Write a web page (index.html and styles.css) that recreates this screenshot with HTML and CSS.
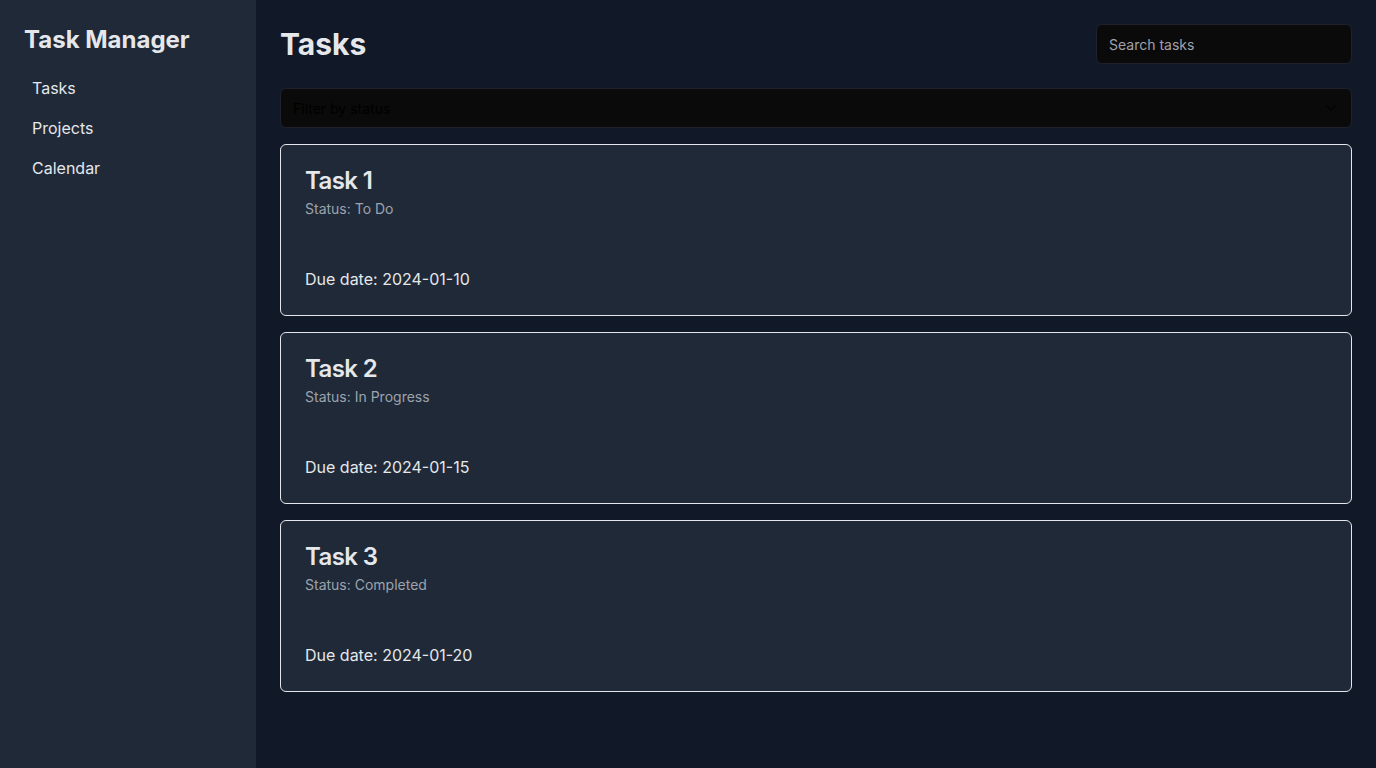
FILE: index.html
```html
<!DOCTYPE html>
<html lang="en">
<head>
<meta charset="utf-8">
<title>Task Manager</title>
<link rel="stylesheet" href="styles.css">
</head>
<body>
<div class="app">
  <aside class="sidebar">
    <h1 class="brand">Task Manager</h1>
    <nav class="nav">
      <a class="nav-item" href="#">Tasks</a>
      <a class="nav-item" href="#">Projects</a>
      <a class="nav-item" href="#">Calendar</a>
    </nav>
  </aside>
  <main class="main">
    <header class="main-header">
      <h2 class="page-title">Tasks</h2>
      <input class="search" type="text" placeholder="Search tasks">
    </header>
    <button class="select" type="button">
      <span class="select-placeholder">Filter by status</span>
      <svg class="chevron" width="16" height="16" viewBox="0 0 24 24" fill="none" stroke="currentColor" stroke-width="2" stroke-linecap="round" stroke-linejoin="round"><path d="m6 9 6 6 6-6"/></svg>
    </button>
    <div class="task-list">
      <div class="card">
        <div class="card-header">
          <h3 class="card-title">Task 1</h3>
          <p class="card-desc">Status: To Do</p>
        </div>
        <div class="card-content">
          <p class="due">Due date: 2024-01-10</p>
        </div>
      </div>
      <div class="card">
        <div class="card-header">
          <h3 class="card-title">Task 2</h3>
          <p class="card-desc">Status: In Progress</p>
        </div>
        <div class="card-content">
          <p class="due">Due date: 2024-01-15</p>
        </div>
      </div>
      <div class="card">
        <div class="card-header">
          <h3 class="card-title">Task 3</h3>
          <p class="card-desc">Status: Completed</p>
        </div>
        <div class="card-content">
          <p class="due">Due date: 2024-01-20</p>
        </div>
      </div>
    </div>
  </main>
</div>
</body>
</html>
```

FILE: styles.css
```css
* { box-sizing: border-box; }
html, body { margin: 0; padding: 0; height: 100%; }
body {
  font-family: Inter, "Noto Sans", sans-serif;
  background: #111827;
  color: #e5e7eb;
}
.app {
  display: flex;
  min-height: 100vh;
}
.sidebar {
  width: 256px;
  flex-shrink: 0;
  background: #1f2937;
  padding: 24px;
}
.brand {
  margin: 0 0 12px;
  font-size: 24px;
  line-height: 32px;
  font-weight: 700;
  color: #e5e7eb;
}
.nav {
  display: flex;
  flex-direction: column;
}
.nav-item {
  display: block;
  padding: 8px;
  font-size: 16px;
  line-height: 24px;
  color: #e5e7eb;
  text-decoration: none;
}
.main {
  flex: 1;
  padding: 24px;
}
.main-header {
  display: flex;
  align-items: center;
  justify-content: space-between;
  margin-bottom: 24px;
}
.page-title {
  margin: 0;
  font-size: 30px;
  line-height: 36px;
  font-weight: 700;
  color: #e5e7eb;
}
.search {
  width: 256px;
  height: 40px;
  padding: 8px 12px;
  border: 1px solid #1f2329;
  border-radius: 6px;
  background: #0a0a0a;
  color: #e5e7eb;
  font-family: inherit;
  font-size: 14px;
  outline: none;
}
.search::placeholder { color: #a1a1aa; }
.select {
  width: 100%;
  height: 40px;
  display: flex;
  align-items: center;
  justify-content: space-between;
  padding: 8px 12px;
  border: 1px solid #1f2329;
  border-radius: 6px;
  background: #0a0a0a;
  font-family: inherit;
  font-size: 14px;
  color: #000;
  margin-bottom: 16px;
}
.select-placeholder { color: #000; }
.chevron { color: #000; opacity: 0.6; }
.task-list {
  display: flex;
  flex-direction: column;
  gap: 16px;
}
.card {
  background: #1f2937;
  border: 1px solid #e5e7eb;
  border-radius: 6px;
}
.card-header {
  padding: 24px;
  display: flex;
  flex-direction: column;
  gap: 6px;
}
.card-title {
  margin: 0;
  font-size: 24px;
  line-height: 24px;
  font-weight: 600;
  letter-spacing: -0.6px;
  color: #e5e7eb;
}
.card-desc {
  margin: 0;
  font-size: 14px;
  line-height: 20px;
  color: #9ca3af;
}
.card-content {
  padding: 24px;
}
.due {
  margin: 0;
  font-size: 16px;
  line-height: 24px;
  color: #e5e7eb;
}
```
